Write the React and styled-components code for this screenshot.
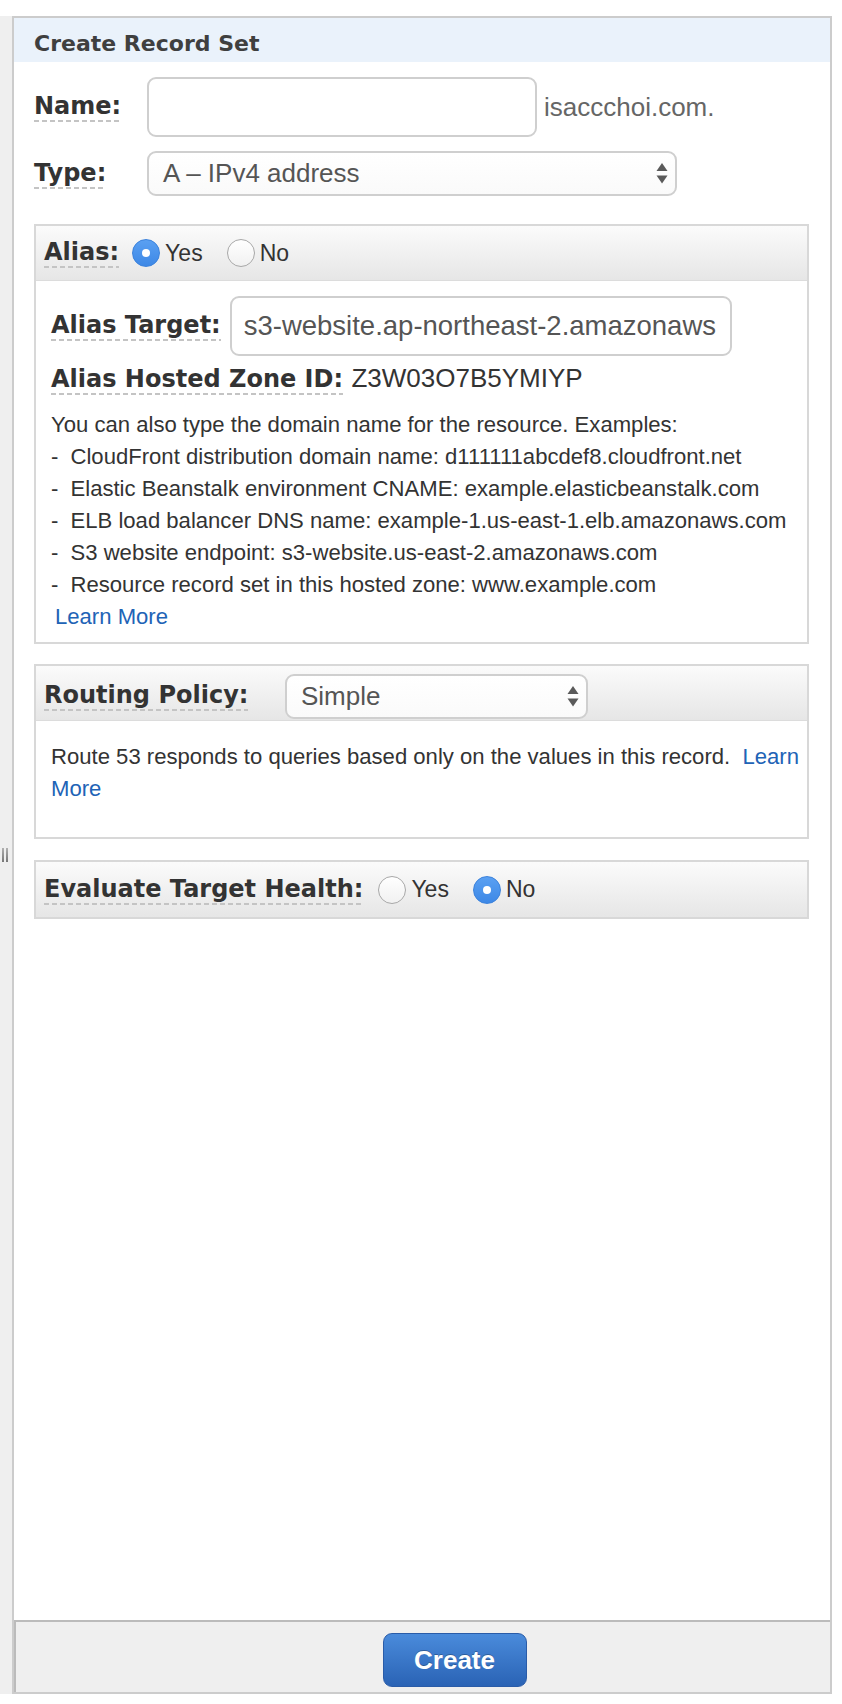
import React from 'react';
import styled, { createGlobalStyle, css } from 'styled-components';

const GlobalStyle = createGlobalStyle`
  html, body { margin: 0; padding: 0; background: #ffffff; }
  body { font-family: "Liberation Sans", Arial, sans-serif; }
  *, *::before, *::after { box-sizing: border-box; }
`;

const Page = styled.div`
  display: flex;
  width: 842px;
  height: 1678px;
  margin-top: 16px;
`;

const Gutter = styled.div`
  flex: none;
  width: 12px;
  background: #efefef;
  display: flex;
  align-items: center;
  padding-left: 2px;
  gap: 2px;
`;

const GripBar = styled.span`
  width: 2px;
  height: 14px;
  background: linear-gradient(#b0b0b0, #777777);
`;

const Panel = styled.section`
  flex: none;
  width: 820px;
  border: 2px solid #cccccc;
  display: flex;
  flex-direction: column;
`;

const PanelTitle = styled.h2`
  margin: 0;
  height: 44px;
  padding: 8px 20px 0;
  background: #eaf2fb;
  font: bold 22px/36px "DejaVu Sans", Verdana, sans-serif;
  color: #3f3f3f;
`;

const Content = styled.div`
  flex: 1;
  padding: 15px 21px 0 20px;
  background: #ffffff;
`;

const FieldRow = styled.div`
  display: flex;
  align-items: center;
  margin-top: ${(p) => p.$mt || 0}px;
`;

const LabelCell = styled.div`
  flex: none;
  width: ${(p) => p.$w}px;
`;

const Label = styled.span`
  display: inline-block;
  font: bold 24px/28px "DejaVu Sans", Verdana, sans-serif;
  color: #333333;
  padding-bottom: 2px;
  white-space: nowrap;
  background: repeating-linear-gradient(to right, #c4c4c4 0 5px, transparent 5px 8px) left bottom / 100% 2px no-repeat;
`;

const TextBox = styled.div`
  flex: none;
  width: ${(p) => p.$w}px;
  height: 60px;
  margin-left: ${(p) => p.$ml || 0}px;
  border: 2px solid #cfcfcf;
  border-radius: 9px;
  background: #ffffff;
  padding: 0 12px;
  display: flex;
  align-items: center;
  font-size: 27.5px;
  color: #555555;
`;

const TextValue = styled.span`
  flex: 1;
  min-width: 0;
  overflow: hidden;
  white-space: nowrap;
`;

const Suffix = styled.span`
  margin-left: 7px;
  font-size: 26px;
  color: #666666;
`;

const Select = styled.div`
  flex: none;
  width: ${(p) => p.$w}px;
  height: 45px;
  border: 2px solid #cfcfcf;
  border-radius: 9px;
  background: linear-gradient(#ffffff, #fafafa);
  display: flex;
  align-items: center;
  justify-content: space-between;
  padding: 0 7px 0 14px;
  font-size: 26px;
  color: #555555;
`;

const Arrows = () => (
  <svg width="12" height="21" viewBox="0 0 12 21" aria-hidden="true">
    <polygon points="0.5,8 6,0 11.5,8" fill="#5a5a5a" />
    <polygon points="0.5,12.5 11.5,12.5 6,20.5" fill="#5a5a5a" />
  </svg>
);

const Box = styled.section`
  margin-top: ${(p) => p.$mt}px;
  border: 2px solid #d8d8d8;
  background: #ffffff;
`;

const BoxHeader = styled.div`
  height: 55px;
  display: flex;
  align-items: center;
  padding: ${(p) => p.$top || 0}px 8px 0;
  background: linear-gradient(#fbfbfb, #e6e6e6);
  ${(p) => !p.$alone && css`border-bottom: 1px solid #dcdcdc;`}
`;

const BoxBody = styled.div`
  padding: ${(p) => p.$pad};
`;

const Options = styled.div`
  display: flex;
  align-items: center;
  gap: 24px;
  margin-left: ${(p) => p.$ml}px;
`;

const Option = styled.span`
  display: flex;
  align-items: center;
  gap: 5px;
  font-size: 23px;
  color: #333333;
`;

const Radio = styled.span`
  flex: none;
  width: 28px;
  height: 28px;
  border-radius: 50%;
  display: flex;
  align-items: center;
  justify-content: center;
  ${(p) =>
    p.$on
      ? css`
          background: linear-gradient(#5aa0f2, #3d88e6);
          border: 1px solid #3b82dc;
          &::after {
            content: '';
            width: 8px;
            height: 8px;
            border-radius: 50%;
            background: #ffffff;
          }
        `
      : css`
          background: linear-gradient(#ffffff, #f1f1f1);
          border: 1.5px solid #a8a8a8;
        `}
`;

const ZoneLine = styled.div`
  margin-top: 7px;
  font: bold 24px/28px "DejaVu Sans", Verdana, sans-serif;
  color: #333333;
`;

const ZoneValue = styled.span`
  font: 26px "Liberation Sans", Arial, sans-serif;
  color: #333333;
`;

const Text = styled.div`
  margin-top: ${(p) => p.$mt || 0}px;
  font-size: 22.1px;
  line-height: 32px;
  color: #333333;
`;

const Examples = styled.ul`
  list-style: none;
  margin: 0;
  padding: 0;
`;

const Example = styled.li`
  display: flex;
  white-space: nowrap;
`;

const Dash = styled.span`
  flex: none;
  width: 19.5px;
`;

const Link = styled.a`
  color: #2163b6;
  text-decoration: none;
  cursor: pointer;
`;

const LinkLine = styled.div`
  padding-left: 4px;
`;

const Footer = styled.footer`
  flex: none;
  height: 72px;
  border-top: 2px solid #bbbbbb;
  border-left: 2px solid #bbbbbb;
  background: #efefef;
  display: flex;
  justify-content: center;
  align-items: flex-start;
  padding: 11px 0 0 63px;
`;

const CreateButton = styled.button`
  width: 144px;
  height: 54px;
  border-radius: 9px;
  border: 1px solid #2a5ca8;
  background: linear-gradient(#4a8bdb, #2a63b5);
  color: #ffffff;
  font: bold 26px "Liberation Sans", Arial, sans-serif;
  text-shadow: 0 -1px 0 rgba(0, 0, 0, 0.25);
  cursor: pointer;
`;

const examples = [
  'CloudFront distribution domain name: d111111abcdef8.cloudfront.net',
  'Elastic Beanstalk environment CNAME: example.elasticbeanstalk.com',
  'ELB load balancer DNS name: example-1.us-east-1.elb.amazonaws.com',
  'S3 website endpoint: s3-website.us-east-2.amazonaws.com',
  'Resource record set in this hosted zone: www.example.com',
];

export default function App() {
  return (
    <>
      <GlobalStyle />
      <Page>
        <Gutter>
          <GripBar />
          <GripBar />
        </Gutter>
        <Panel>
          <PanelTitle>Create Record Set</PanelTitle>
          <Content>
            <FieldRow>
              <LabelCell $w={113}>
                <Label>Name:</Label>
              </LabelCell>
              <TextBox $w={390}>
                <TextValue />
              </TextBox>
              <Suffix>isaccchoi.com.</Suffix>
            </FieldRow>
            <FieldRow $mt={14}>
              <LabelCell $w={113}>
                <Label>Type:</Label>
              </LabelCell>
              <Select $w={530}>
                <span>A – IPv4 address</span>
                <Arrows />
              </Select>
            </FieldRow>

            <Box $mt={28}>
              <BoxHeader>
                <Label>Alias:</Label>
                <Options $ml={13}>
                  <Option>
                    <Radio $on />
                    Yes
                  </Option>
                  <Option>
                    <Radio />
                    No
                  </Option>
                </Options>
              </BoxHeader>
              <BoxBody $pad="15px 15px 9px">
                <FieldRow>
                  <Label>Alias Target:</Label>
                  <TextBox $w={502} $ml={9}>
                    <TextValue>s3-website.ap-northeast-2.amazonaws</TextValue>
                  </TextBox>
                </FieldRow>
                <ZoneLine>
                  <Label>Alias Hosted Zone ID:</Label> <ZoneValue>Z3W03O7B5YMIYP</ZoneValue>
                </ZoneLine>
                <Text $mt={14}>
                  <div>You can also type the domain name for the resource. Examples:</div>
                  <Examples>
                    {examples.map((e) => (
                      <Example key={e}>
                        <Dash>-</Dash>
                        <span>{e}</span>
                      </Example>
                    ))}
                  </Examples>
                  <LinkLine>
                    <Link>Learn More</Link>
                  </LinkLine>
                </Text>
              </BoxBody>
            </Box>

            <Box $mt={20}>
              <BoxHeader $top={6}>
                <LabelCell $w={241}>
                  <Label>Routing Policy:</Label>
                </LabelCell>
                <Select $w={303}>
                  <span>Simple</span>
                  <Arrows />
                </Select>
              </BoxHeader>
              <BoxBody $pad="20px 6px 32px 15px">
                <Text>
                  Route 53 responds to queries based only on the values in this record.{'\u00a0 '}
                  <Link>Learn More</Link>
                </Text>
              </BoxBody>
            </Box>

            <Box $mt={21}>
              <BoxHeader $alone>
                <Label>Evaluate Target Health:</Label>
                <Options $ml={15}>
                  <Option>
                    <Radio />
                    Yes
                  </Option>
                  <Option>
                    <Radio $on />
                    No
                  </Option>
                </Options>
              </BoxHeader>
            </Box>
          </Content>
          <Footer>
            <CreateButton type="button">Create</CreateButton>
          </Footer>
        </Panel>
      </Page>
    </>
  );
}
